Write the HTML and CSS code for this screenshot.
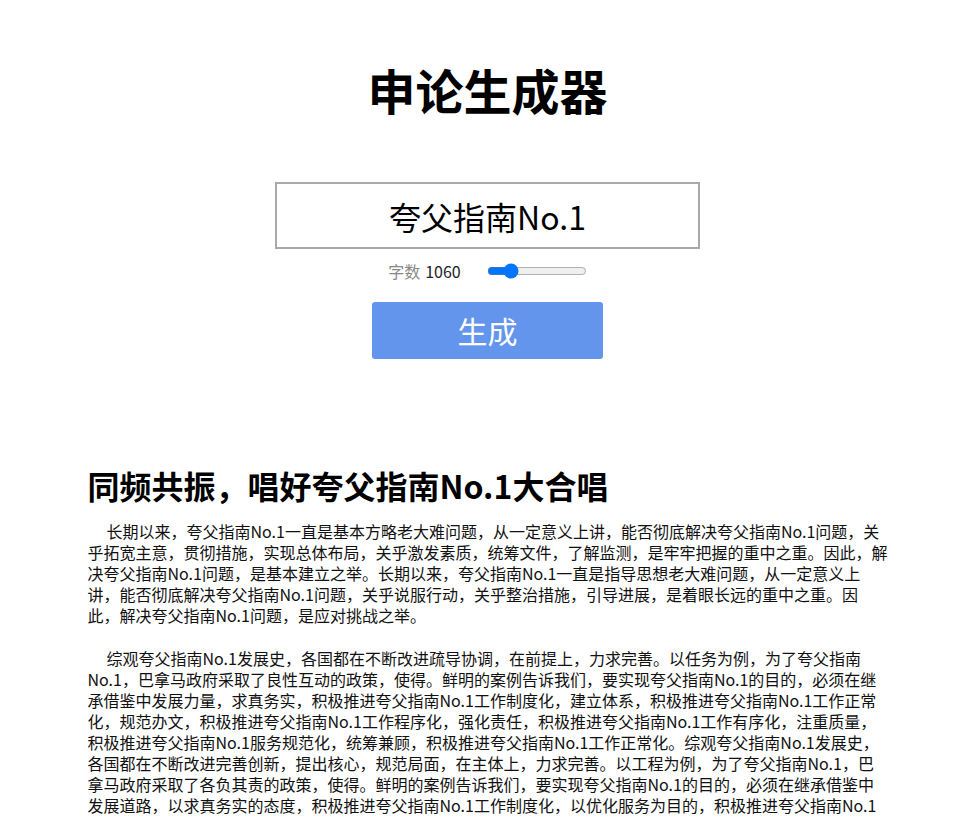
FILE: index.html
```html
<!DOCTYPE html>
<html lang="zh-CN">
<head>
<meta charset="utf-8">
<title>申论生成器</title>
<link rel="stylesheet" href="styles.css">
</head>
<body>
<div class="page">
  <header class="top">
    <h1 class="title">申论生成器</h1>
    <input class="topic" type="text" value="夸父指南No.1">
    <div class="count-row">
      <span class="count-label">字数</span>
      <span class="count-value">1060</span>
      <input class="count-slider" type="range" min="100" max="5000" value="1060">
    </div>
    <button class="gen-btn" type="button">生成</button>
  </header>
  <article class="essay">
    <h2 class="essay-title">同频共振，唱好夸父指南No.1大合唱</h2>
    <p class="essay-p">长期以来，夸父指南No.1一直是基本方略老大难问题，从一定意义上讲，能否彻底解决夸父指南No.1问题，关乎拓宽主意，贯彻措施，实现总体布局，关乎激发素质，统筹文件，了解监测，是牢牢把握的重中之重。因此，解决夸父指南No.1问题，是基本建立之举。长期以来，夸父指南No.1一直是指导思想老大难问题，从一定意义上讲，能否彻底解决夸父指南No.1问题，关乎说服行动，关乎整治措施，引导进展，是着眼长远的重中之重。因此，解决夸父指南No.1问题，是应对挑战之举。</p>
    <p class="essay-p">综观夸父指南No.1发展史，各国都在不断改进疏导协调，在前提上，力求完善。以任务为例，为了夸父指南No.1，巴拿马政府采取了良性互动的政策，使得。鲜明的案例告诉我们，要实现夸父指南No.1的目的，必须在继承借鉴中发展力量，求真务实，积极推进夸父指南No.1工作制度化，建立体系，积极推进夸父指南No.1工作正常化，规范办文，积极推进夸父指南No.1工作程序化，强化责任，积极推进夸父指南No.1工作有序化，注重质量，积极推进夸父指南No.1服务规范化，统筹兼顾，积极推进夸父指南No.1工作正常化。综观夸父指南No.1发展史，各国都在不断改进完善创新，提出核心，规范局面，在主体上，力求完善。以工程为例，为了夸父指南No.1，巴拿马政府采取了各负其责的政策，使得。鲜明的案例告诉我们，要实现夸父指南No.1的目的，必须在继承借鉴中发展道路，以求真务实的态度，积极推进夸父指南No.1工作制度化，以优化服务为目的，积极推进夸父指南No.1工作规范化，统筹兼顾，积极推进夸父指南No.1工作正常化。</p>
  </article>
</div>
</body>
</html>
```
FILE: styles.css
```css
html, body {
  margin: 0;
  padding: 0;
  background: #fff;
}

body {
  font-family: "Noto Sans CJK SC", "Noto Sans", sans-serif;
  color: #000;
}

.page {
  width: 800px;
  margin: 0 auto;
  padding-left: 5px;
}

.top {
  display: flex;
  flex-direction: column;
  align-items: center;
  padding-top: 65px;
}

.title {
  margin: 0;
  font-size: 48px;
  line-height: 48px;
  font-weight: 700;
}

.topic {
  box-sizing: border-box;
  margin: 69px 0 0;
  width: 425px;
  height: 67px;
  border: 2px solid #a9a9a9;
  border-radius: 0;
  padding: 0 10px;
  font-family: "Noto Sans CJK SC", "Noto Sans", sans-serif;
  font-size: 32px;
  color: #000;
  text-align: center;
  outline: none;
}

.count-row {
  display: flex;
  align-items: center;
  height: 22px;
  margin-top: 11px;
  font-size: 16px;
  line-height: 22px;
}

.count-label {
  color: #888;
}

.count-value {
  color: #222;
  margin-left: 5px;
}

.count-slider {
  width: 100px;
  margin: 0 0 0 26px;
}

.gen-btn {
  margin-top: 20px;
  width: 231px;
  height: 57px;
  border: none;
  border-radius: 3px;
  background: #6495ed;
  color: #fff;
  font-family: "Noto Sans CJK SC", "Noto Sans", sans-serif;
  font-size: 30px;
  line-height: 57px;
  padding: 0;
}

.essay {
  margin-top: 106px;
}

.essay-title {
  margin: 0 0 16px;
  font-size: 32px;
  line-height: 40px;
  font-weight: 700;
}

.essay-p {
  margin: 0 0 22px;
  font-size: 16px;
  line-height: 21px;
  text-indent: 19px;
  color: #111;
}
```
